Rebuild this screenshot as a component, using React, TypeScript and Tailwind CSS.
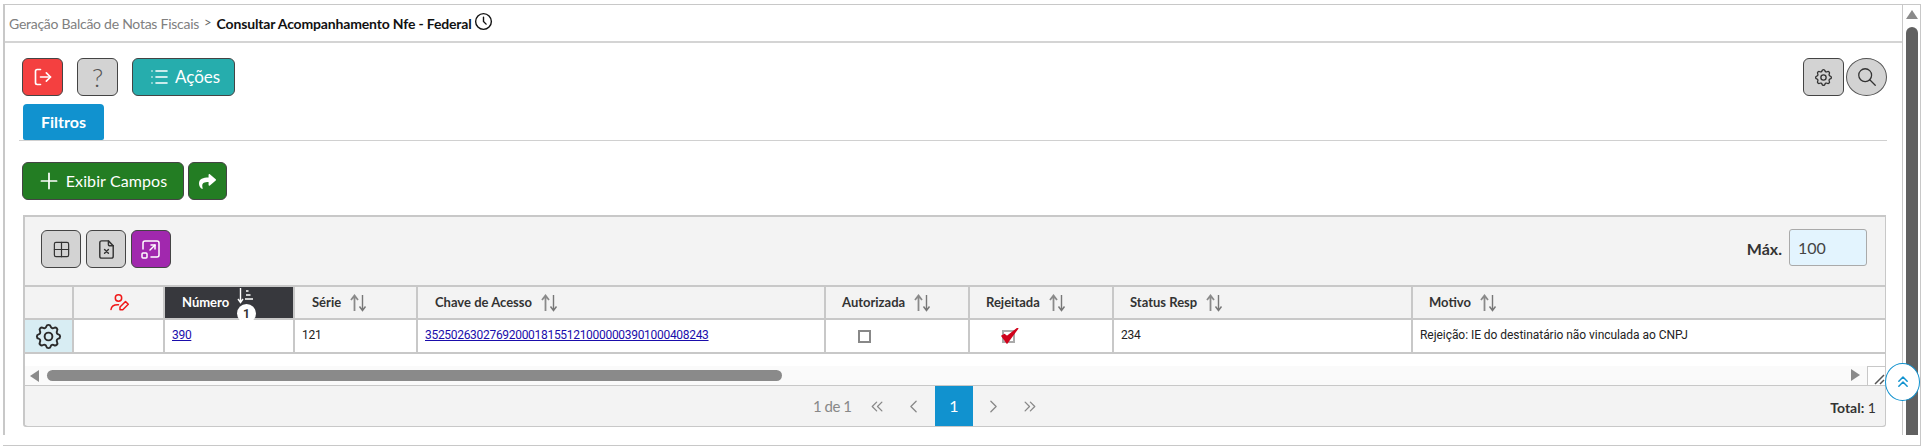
import type { ReactNode } from "react";
import { FaShare } from "react-icons/fa";
import {
  TbChevronLeft,
  TbChevronRight,
  TbChevronsLeft,
  TbChevronsRight,
  TbChevronsUp,
  TbClock,
  TbFileX,
  TbList,
  TbPlus,
  TbSearch,
  TbSettings,
  TbWindowMaximize,
} from "react-icons/tb";
import { Grid2x2, LogOut } from "lucide-react";

const rowGrid = "grid grid-cols-[49px_91px_130px_123px_408px_144px_144px_299px_1fr]";
const lato = "font-['Lato',sans-serif]";
const roboto = "font-['Roboto',sans-serif]";

function SortIcon() {
  return (
    <svg width="17" height="18" viewBox="0 0 17 18" fill="none" className="ml-[9px] shrink-0">
      <path d="M4.5 17V2M1 6l3.5-4.5L8 6" stroke="#8a8a8a" strokeWidth="1.8" />
      <path d="M12.5 1v15M9.500 12.5l3 4 3-4" stroke="#777" strokeWidth="1.4" />
    </svg>
  );
}

function SortedIcon() {
  return (
    <svg width="17" height="16" viewBox="0 0 17 16" fill="none" className="absolute left-[72px] top-[1px]">
      <path d="M3.5 0v14M1 11l2.500 3.500L6 11" stroke="#fff" strokeWidth="1.4" />
      <path d="M9 3h2.500M9 7h4.500M8 11h8" stroke="#fff" strokeWidth="1.300" />
    </svg>
  );
}

function UserEditIcon() {
  return (
    <svg width="19" height="17" viewBox="0 0 19 17" fill="none" stroke="#f01818" strokeWidth="1.500">
      <circle cx="8.500" cy="4" r="3.200" />
      <path d="M1 15.500c.5-3.500 3.500-5 7.500-4.800" strokeLinecap="round" />
      <path d="M10 15.800v-2.800l5.500-5.500 2.800 2.800-5.500 5.500z" strokeLinejoin="round" />
    </svg>
  );
}

function ToolButton({ className, children }: { className: string; children: ReactNode }) {
  return (
    <button
      className={`flex h-[38px] items-center justify-center rounded-md border border-[#444] ${className}`}
    >
      {children}
    </button>
  );
}

function HeaderCell({ label, pad }: { label: string; pad: string }) {
  return (
    <div className={`flex items-center border-r-2 border-[#c8c8c8] bg-[#f3f3f3] ${pad}`}>
      <span className={`${lato} text-[13px] font-bold text-[#333]`}>{label}</span>
      <SortIcon />
    </div>
  );
}

function BodyCell({ children, pad = "pl-[7px]" }: { children?: ReactNode; pad?: string }) {
  return (
    <div
      className={`flex h-full border-r-2 border-[#c8c8c8] bg-white pt-[7px] text-[12px] leading-[16px] tracking-[-0.3px] text-[#222] ${pad}`}
    >
      {children}
    </div>
  );
}

export default function App() {
  return (
    <div className={`${lato} relative h-[448px] w-[1921px] overflow-hidden bg-white pt-[4px]`}>
      <div className="ml-[3px] flex h-[442px] border border-[#c8c8c8] border-l-0">
        <div className="mb-[10px] w-[1899px] border-l-2 border-[#c8c8c8]">
          <header className="flex h-[38px] items-center border-b-2 border-[#d4d4d4] pl-[4px]">
            <span className="text-[14px] tracking-[-0.26px] text-[#808080]">Geração Balcão de Notas Fiscais</span>
            <span className="mx-[5px] text-[13px] text-[#666]">&gt;</span>
            <span className="text-[14px] font-bold tracking-[-0.16px] text-[#111]">
              Consultar Acompanhamento Nfe - Federal
            </span>
            <TbClock size={21} strokeWidth={1.6} className="mb-[4px] ml-[1px] text-[#111]" />
          </header>

          <div className="pl-[17px] pr-[15px]">
            <div className="mt-[15px] flex">
              <ToolButton className="w-[41px] bg-[#f44040] text-white">
                <LogOut size={20} strokeWidth={2} />
              </ToolButton>
              <ToolButton className="ml-[14px] w-[41px] bg-[#d3d3d3] text-[26px] font-light text-[#555]">?</ToolButton>
              <ToolButton className="ml-[14px] w-[103px] gap-[4px] bg-[#26adad] text-[17px] text-white">
                <TbList size={24} strokeWidth={1.6} />
                Ações
              </ToolButton>
              <ToolButton className="ml-auto w-[41px] bg-[#d3d3d3] text-[#333]">
                <TbSettings size={21} strokeWidth={1.5} />
              </ToolButton>
              <button className="ml-[2px] flex h-[38px] w-[41px] items-center justify-center rounded-[50%] border border-[#555] bg-[#d3d3d3] text-[#333]">
                <TbSearch size={22} strokeWidth={1.4} />
              </button>
            </div>

            <div className="-ml-[3px] mt-[8px] border-b border-[#d0d0d0]">
              <div className="ml-[4px] flex h-[36px] w-[81px] items-center justify-center rounded-b-[2px] rounded-t-[4px] bg-[#1192cf] text-[16px] font-bold text-white">
                Filtros
              </div>
            </div>

            <div className="mt-[21px] flex gap-[4px]">
              <ToolButton className="w-[162px] bg-[#237d23] pr-[3px] text-[16px] text-white">
                <TbPlus size={26} strokeWidth={1.6} />
                <span className="ml-[4px] tracking-[0.1px]">Exibir Campos</span>
              </ToolButton>
              <ToolButton className="w-[39px] bg-[#237d23] text-white">
                <FaShare size={17} />
              </ToolButton>
            </div>

            <section className="ml-[1px] mt-[15px] h-[212px] w-[1863px] rounded-b-[3px] border-2 border-r-[1px] border-[#c8c8c8]">
              <div className="flex h-[68px] items-start bg-[#f3f3f3] pl-[16px] pt-[13px]">
                <ToolButton className="w-[40px] bg-[#d3d3d3] text-[#333]">
                  <Grid2x2 size={19} strokeWidth={1.5} />
                </ToolButton>
                <ToolButton className="ml-[5px] w-[40px] bg-[#d3d3d3] text-[#333]">
                  <TbFileX size={23} strokeWidth={1.5} />
                </ToolButton>
                <ToolButton className="ml-[5px] w-[40px] bg-[#a128ae] text-white">
                  <TbWindowMaximize size={24} strokeWidth={1.5} />
                </ToolButton>
                <span className="ml-auto mt-[7px] text-[16px] font-bold text-[#333]">Máx.</span>
                <div className="-mt-[1px] ml-[7px] mr-[18px] flex h-[37px] w-[78px] items-center rounded-[3px] border border-[#aaa] bg-[#e3f4fe] pl-[8px] text-[16px] text-[#444]">
                  100
                </div>
              </div>

              <div className={`${rowGrid} h-[35px] border-y-2 border-[#c8c8c8]`}>
                <div className="border-r-2 border-[#c8c8c8] bg-[#f3f3f3]" />
                <div className="flex items-center border-r-2 border-[#c8c8c8] bg-[#f3f3f3] pl-[36px]">
                  <UserEditIcon />
                </div>
                <div className="relative flex items-center border-r-2 border-[#c8c8c8] bg-[#37383d] pl-[17px]">
                  <span className="text-[13px] font-bold text-white">Número</span>
                  <SortedIcon />
                  <span className={`${roboto} absolute left-[72px] top-[17px] z-10 flex h-[19px] w-[19px] items-center justify-center rounded-full bg-white text-[12px] font-bold text-[#333]`}>
                    1
                  </span>
                </div>
                <HeaderCell label="Série" pad="pl-[17px]" />
                <HeaderCell label="Chave de Acesso" pad="pl-[17px]" />
                <HeaderCell label="Autorizada" pad="pl-[16px]" />
                <HeaderCell label="Rejeitada" pad="pl-[16px]" />
                <HeaderCell label="Status Resp" pad="pl-[16px]" />
                <div className="flex items-center bg-[#f3f3f3] pl-[16px]">
                  <span className="text-[13px] font-bold text-[#333]">Motivo</span>
                  <SortIcon />
                </div>
              </div>

              <div className={`${rowGrid} ${roboto} h-[34px] border-b-2 border-[#c8c8c8]`}>
                <div className="flex items-center justify-center border-r-2 border-[#c8c8c8] bg-[#d8edf3] text-[#2b2b2b]">
                  <TbSettings size={31} strokeWidth={1.5} />
                </div>
                <BodyCell />
                <BodyCell>
                  <a className="text-[#1a0dab] underline">390</a>
                </BodyCell>
                <BodyCell>121</BodyCell>
                <BodyCell>
                  <a className="text-[#1a0dab] underline">35250263027692000181551210000003901000408243</a>
                </BodyCell>
                <BodyCell pad="pl-[32px]">
                  <span className="mt-[3px] h-[13px] w-[13px] border-2 border-[#888] bg-white" />
                </BodyCell>
                <BodyCell pad="pl-[32px]">
                  <span className="relative mt-[3px] h-[13px] w-[13px] border-2 border-[#aaa] bg-white">
                    <svg width="18" height="16" viewBox="0 0 18 16" className="absolute -left-[3px] -top-[4px]">
                      <path d="M1 8l5 7L17 0 6 8.500 3.500 6.500z" fill="#d0021b" stroke="#d0021b" strokeWidth="1.400" />
                    </svg>
                  </span>
                </BodyCell>
                <BodyCell>234</BodyCell>
                <div className="bg-white pl-[7px] pt-[7px] text-[12px] leading-[16px] tracking-[-0.05px] text-[#222]">
                  Rejeição: IE do destinatário não vinculada ao CNPJ
                </div>
              </div>

              <div className="mt-[12px] flex h-[19px] bg-[#fafafa]">
                <div className="ml-[5px] mt-[4px] h-0 w-0 border-y-[6px] border-r-[9px] border-y-transparent border-r-[#8a8a8a]" />
                <div className="ml-[8px] mt-[4px] h-[11px] w-[735px] rounded-full bg-[#8a8a8a]" />
                <div className="ml-auto mt-[3px] h-0 w-0 border-y-[6.500px] border-l-[9px] border-y-transparent border-l-[#8a8a8a]" />
                <div className="ml-[7px] flex w-[18px] items-end justify-end border-l border-t border-[#c8c8c8] bg-white">
                  <svg width="12" height="12" viewBox="0 0 12 12" fill="none">
                    <path d="M2 11L11 2M7 11l4-4" stroke="#555" strokeWidth="1.5" />
                  </svg>
                </div>
              </div>

              <footer className="flex h-[41px] items-center rounded-b-[3px] border-t border-[#c8c8c8] bg-[#f3f3f3] pl-[788px] text-[#888]">
                <span className="w-[54px] text-[15px] tracking-[-0.5px]">1 de 1</span>
                <span className="flex w-[36px] justify-start"><TbChevronsLeft size={21} strokeWidth={1.5} /></span>
                <span className="flex w-[32px] justify-start"><TbChevronLeft size={21} strokeWidth={1.5} /></span>
                <span className="flex h-full w-[38px] items-center justify-center bg-[#1192cf] text-[16px] text-white">1</span>
                <span className="flex w-[40px] justify-center"><TbChevronRight size={21} strokeWidth={1.5} /></span>
                <span className="flex w-[44px] justify-start pl-[6px]"><TbChevronsRight size={21} strokeWidth={1.5} /></span>
                <span className="ml-auto mr-[9px] mt-[2px] text-[14px] text-[#333]">
                  <b>Total:</b> 1
                </span>
              </footer>
            </section>
          </div>
        </div>

        <aside className="mb-[10px] flex w-[18px] flex-col items-center border-l border-[#c8c8c8]">
          <div className="mt-[5px] h-0 w-0 border-x-[6.500px] border-b-[9px] border-x-transparent border-b-[#8a8a8a]" />
          <div className="mt-[8px] w-[12px] flex-1 rounded-t-full bg-[#606060]" />
        </aside>
      </div>

      <button className="absolute left-[1885px] top-[363px] flex h-[38px] w-[35px] items-center justify-center rounded-[50%] border border-[#1192cf] bg-white text-[#1192cf]">
        <TbChevronsUp size={20} strokeWidth={1.8} />
      </button>
    </div>
  );
}
